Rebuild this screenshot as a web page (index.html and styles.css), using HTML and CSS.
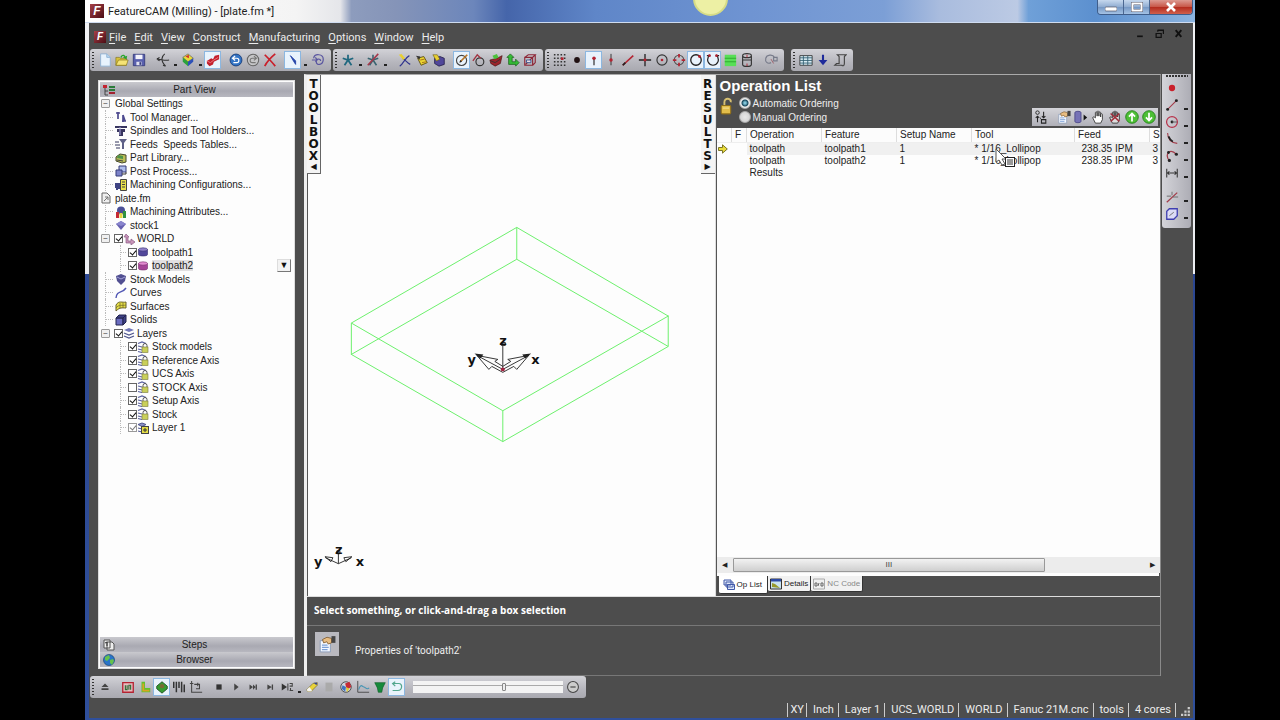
FILE: index.html
```html
<!DOCTYPE html>
<html lang="en">
<head>
<meta charset="utf-8">
<title>FeatureCAM (Milling) - [plate.fm *]</title>
<link rel="stylesheet" href="styles.css">
</head>
<body>
<svg class="defs" aria-hidden="true">
  <symbol id="lay" viewBox="0 0 12 12"><path d="M1 3l5-2 5 2-5 2z" fill="#7076b8"/><path d="M1 6l5 2 5-2M1 9l5 2 5-2" fill="none" stroke="#4f568e" stroke-width="1.3"/></symbol>
  <symbol id="laylock" viewBox="0 0 12 12"><path d="M1 2.500l4-1.500 4 1.500M1 5l4 1M1 8l4 1M1 10.500l4 1" fill="none" stroke="#5a62a0" stroke-width="1.200"/><path d="M6 6V4.500a2 2 0 0 1 4 0V6" fill="none" stroke="#555" /><rect x="5" y="6" width="6" height="5.500" fill="#c9cf5a" stroke="#77793c" stroke-width=".6"/></symbol>
  <symbol id="laycur" viewBox="0 0 12 12"><path d="M1 2.500l4-1.500 4 1.500-4 2zM1 6l4 1M1 9l4 1" fill="#8c92c8" stroke="#4f568e"/><rect x="4.500" y="4.500" width="7" height="7" fill="#e3dc46" stroke="#444"/><path d="M6 8h4M8 6v4" stroke="#333"/></symbol>
  <symbol id="cyl" viewBox="0 0 12 12"><path d="M1.500 3.500v5c0 2 9 2 9 0v-5z" fill="#51479a" stroke="#37306e" stroke-width=".6"/><ellipse cx="6" cy="3.500" rx="4.500" ry="1.700" fill="#8d7fc8" stroke="#37306e" stroke-width=".6"/></symbol>
  <symbol id="props" viewBox="0 0 16 16"><path d="M2 5h9v10H2z" fill="#f4f8ff" stroke="#7d92b4" stroke-width=".7"/><path d="M3.500 9h5M3.500 11h6M3.500 13h5" stroke="#7a9fd6"/><path d="M4 4l4-2 4 1v4l-3 1-1-2-3 1z" fill="#e8bd82" stroke="#7b5527" stroke-width=".7"/><path d="M12 1h3.500v6H12z" fill="#454545"/></symbol>
</svg>
<div class="window">
  <header class="titlebar">
    <span class="logo">F</span>
    <h1 class="title">FeatureCAM (Milling) - [plate.fm *]</h1>
    <span class="orb"></span>
    <div class="winbtns">
      <button aria-label="Minimize"><svg viewBox="0 0 12 10"><rect x="0" y="5" width="12" height="4" rx="1" fill="#fff" stroke="#556" stroke-width=".7"/></svg></button>
      <button aria-label="Maximize"><svg viewBox="0 0 12 10"><rect x="1.500" y="1.500" width="9" height="7" fill="none" stroke="#556" stroke-width="3"/><rect x="1.500" y="1.500" width="9" height="7" fill="none" stroke="#fff" stroke-width="2"/></svg></button>
      <button class="close" aria-label="Close"><svg viewBox="0 0 12 10"><path d="M2 1l8 8M10 1L2 9" stroke="#fff" stroke-width="2.600"/></svg></button>
    </div>
  </header>
  <div class="frame">
    <nav class="menubar">
      <span class="logo small">F</span>
      <button><u>F</u>ile</button><button><u>E</u>dit</button><button><u>V</u>iew</button><button><u>C</u>onstruct</button><button><u>M</u>anufacturing</button><button><u>O</u>ptions</button><button><u>W</u>indow</button><button><u>H</u>elp</button>
      <div class="docbtns">
        <button aria-label="Minimize document"><svg viewBox="0 0 8 8"><path d="M1 6.500h5" stroke="#111" stroke-width="1.500"/></svg></button>
        <button aria-label="Restore document"><svg viewBox="0 0 8 8"><path d="M2.500 1h5v3.500M2.500 1v1.500M2 1.200h5.500M1 4h4.500v3.500H1zM.5 4h5" fill="none" stroke="#111" stroke-width="1.100"/></svg></button>
        <button aria-label="Close document"><svg viewBox="0 0 8 8"><path d="M1.500 1l5 6M6.500 1l-5 6" stroke="#111" stroke-width="1.700"/></svg></button>
      </div>
    </nav>

    <div class="toolbars">
      <div class="bar">
        <i class="grip"></i>
        <button aria-label="New"><svg viewBox="0 0 16 16"><path d="M3 1h7l4 4v10H3z" fill="#e8f3fd" stroke="#8fb1d3"/><path d="M10 1v4h4" fill="#b9d7f2" stroke="#8fb1d3"/></svg></button>
        <button aria-label="Open"><svg viewBox="0 0 16 16"><path d="M1 14V5h4l1 1h7v8z" fill="#d8c23c" stroke="#7d6c12" stroke-width=".7"/><path d="M1 14l3-6h11l-2 6z" fill="#f5e375" stroke="#7d6c12" stroke-width=".7"/><path d="M6 5c1-4 5-4 6-1l2-1-1 4-4-2 1.500-.5C10 3 8 3 8 5z" fill="#25a52b"/></svg></button>
        <button aria-label="Save"><svg viewBox="0 0 16 16"><path d="M1.500 1.500h13v13h-13z" fill="#5960ae" stroke="#353a7c"/><path d="M4 2h8v5H4z" fill="#f3f3fb"/><path d="M5 10h6v4H5z" fill="#e2e2f0"/><path d="M8.500 10.500h2v3h-2z" fill="#333a78"/></svg></button>
        <i class="sep wide"></i>
        <button aria-label="Snap axes"><svg viewBox="0 0 16 16"><path d="M1 7c5 0 8 2 14 1M10 1C6 4 5 9 11 15M1 7l3-2M1 7l3 2M11 15l-3-1" fill="none" stroke="#333" stroke-width="1.300"/></svg></button><button class="drop" aria-label="Axes options"></button>
        <button aria-label="View cube"><svg viewBox="0 0 16 16"><path d="M8 1l6 5-6 4-6-5z" fill="#e9d93b" stroke="#444" stroke-width=".6"/><path d="M2 5l6 5v5L2 10z" fill="#2da23a"/><path d="M14 6l-6 4v5l6-5z" fill="#2d51b8"/><path d="M5 4l4-2v4z" fill="#d02d2d"/></svg></button><button class="drop" aria-label="Views"></button>
        <button class="on" aria-label="Shade"><svg viewBox="0 0 16 16"><path d="M1 9l5-3 2 1 2-4 5-1v5l-6 3-1 3-4 2-3-3z" fill="#c3202d"/><path d="M1 9l4 2 4-3 5-3" stroke="#ef8088" fill="none"/></svg></button>
        <i class="sep"></i>
        <button aria-label="Undo"><svg viewBox="0 0 16 16"><circle cx="8" cy="8" r="6.800" fill="#3273c4" stroke="#173c78"/><path d="M5 6h4c3 0 3 5 0 5H5M7 3.500L4 6l3 2.500" fill="none" stroke="#fff" stroke-width="1.400"/></svg></button>
        <button aria-label="Redo"><svg viewBox="0 0 16 16"><circle cx="8" cy="8" r="6.500" fill="#c6c6c8" stroke="#666" stroke-width="1.200"/><path d="M11 6H7c-3 0-3 5 0 5h4M9 3.500L12 6 9 8.500" fill="none" stroke="#777" stroke-width="1.200"/></svg></button>
        <button aria-label="Delete"><svg viewBox="0 0 16 16"><path d="M2 2c4 4 8 8 12 13M14 1C9 5 5 9 2 15" fill="none" stroke="#c9202b" stroke-width="2"/></svg></button>
        <i class="sep"></i>
        <button class="on" aria-label="Select"><svg viewBox="0 0 16 16"><path d="M5 3l6 6v4l-2-3z" fill="#2543a8" stroke="#2543a8"/></svg></button><button class="drop" aria-label="Select options"></button>
        <button aria-label="Lasso"><svg viewBox="0 0 16 16"><path d="M3 6C4 0 14 1 14 7c0 7-8 8-8 3 0-4 5-4 5-1M1 8h6M5 5l2 3-2 2" fill="none" stroke="#5a56a0" stroke-width="1.400"/></svg></button>
      </div>
      <div class="bar">
        <i class="grip"></i>
        <button aria-label="Features"><svg viewBox="0 0 16 16"><path d="M8 2v5M2 6l6 2 6-2M8 8l4 6M8 8l-4 6" fill="none" stroke="#20687f" stroke-width="2"/></svg></button><button class="drop" aria-label="Feature options"></button>
        <button aria-label="Remove feature"><svg viewBox="0 0 16 16"><path d="M8 2v5M2 6l6 2 6-2M8 8l4 6M8 8l-4 6" fill="none" stroke="#38636f" stroke-width="1.800"/><path d="M14 1L2 14" stroke="#a5384a" stroke-width="1.800"/></svg></button><button class="drop" aria-label="Remove options"></button>
        <i class="sep wide"></i>
        <button aria-label="Curve wizard"><svg viewBox="0 0 16 16"><path d="M2 15c4-2 5-9 11-12M5 6c4 2 5 5 9 7" fill="none" stroke="#30348e" stroke-width="1.300"/><path d="M1 2l3-1 4 5-2 2z" fill="#e8cf30"/></svg></button>
        <button aria-label="Surface wizard"><svg viewBox="0 0 16 16"><path d="M3 6l7-2 4 7-7 3z" fill="#e9d431" stroke="#5b4c10"/><path d="M1 3l5 1-1 4z" fill="#333"/><path d="M6 8l5-1M8 11l5-1" stroke="#a56a18"/></svg></button>
        <button aria-label="Solid wizard"><svg viewBox="0 0 16 16"><path d="M3 6l6-2 5 2v7l-6 2-5-3z" fill="#51479a" stroke="#2b2550"/><path d="M1 2l5 0 3 5-4 2z" fill="#e8cf30" stroke="#5b4c10" stroke-width=".6"/></svg></button>
        <i class="sep"></i>
        <button class="on" aria-label="Circle edit"><svg viewBox="0 0 16 16"><circle cx="7.500" cy="8.500" r="5.800" fill="none" stroke="#444" stroke-width="1.300"/><path d="M6 10L14 2" stroke="#b87525" stroke-width="2"/><path d="M5 11l3-1-2-2z" fill="#222"/></svg></button>
        <button aria-label="Pocket"><svg viewBox="0 0 16 16"><circle cx="9" cy="10" r="4.500" fill="none" stroke="#333" stroke-width="1.300"/><path d="M1 9L6 2l4 4" fill="none" stroke="#a33542" stroke-width="1.500"/></svg></button>
        <button aria-label="Stock"><svg viewBox="0 0 16 16"><path d="M1 8l8-2 6-3-2 9-6 3-5-3z" fill="#9c252c" stroke="#411" stroke-width=".7"/><path d="M4 3l5-2 2 4-5 2z" fill="#4dc13d"/><path d="M2 9l5 2 6-4" stroke="#333" fill="none"/></svg></button>
        <button aria-label="Setup axes"><svg viewBox="0 0 16 16"><path d="M5 1l4 4H7v5h4V7l4 4-4 4v-2H3V5H1z" fill="#35bb36" stroke="#175c18" stroke-width=".8"/></svg></button>
        <button aria-label="Align stock"><svg viewBox="0 0 16 16"><path d="M2 5h9v9H2zM2 5l4-3h8l-3 3M14 2v9l-3 3M3 13L12 4" fill="none" stroke="#8d2636" stroke-width="1.300"/><path d="M4 8h5v3H4z" fill="#f0dfe2" stroke="#36508e"/></svg></button>
      </div>
      <div class="bar">
        <i class="grip"></i>
        <button aria-label="Snap grid"><svg viewBox="0 0 16 16"><path d="M1 2h14M1 6h14M1 10h14M1 14h14" stroke="#333" stroke-width="1.800" stroke-dasharray="1.800 2"/><path d="M9 5h3v3H9z" fill="#b42331"/></svg></button>
        <button aria-label="Snap point"><svg viewBox="0 0 16 16"><circle cx="8" cy="8" r="3.300" fill="#201012"/></svg></button>
        <button class="on" aria-label="Snap endpoint"><svg viewBox="0 0 16 16"><path d="M8 6v8" stroke="#333" stroke-width="1.400"/><circle cx="8" cy="6" r="2" fill="#b42331"/></svg></button>
        <button aria-label="Snap midpoint"><svg viewBox="0 0 16 16"><path d="M8 1v13" stroke="#333" stroke-width="1.100"/><circle cx="8" cy="8" r="2" fill="#b42331"/></svg></button>
        <button aria-label="Snap line"><svg viewBox="0 0 16 16"><path d="M2 14L14 3" stroke="#b42331" stroke-width="1.800"/><path d="M2 14l3-3" stroke="#222" stroke-width="2"/></svg></button>
        <button aria-label="Snap intersection"><svg viewBox="0 0 16 16"><path d="M8 1v14M1 8h14" stroke="#222" stroke-width="1.500"/><circle cx="8" cy="8" r="1.700" fill="#b42331"/></svg></button>
        <button aria-label="Snap centre"><svg viewBox="0 0 16 16"><circle cx="8" cy="8" r="5.800" fill="none" stroke="#333" stroke-width="1.300"/><circle cx="8" cy="8" r="1.500" fill="#b42331"/></svg></button>
        <button aria-label="Snap quadrant"><svg viewBox="0 0 16 16"><circle cx="8" cy="8" r="5.500" fill="none" stroke="#555" stroke-width="1.200"/><path d="M8 1v4M8 11v4M1 8h4M11 8h4" stroke="#b42331" stroke-width="2"/></svg></button>
        <button class="on" aria-label="Snap circle"><svg viewBox="0 0 16 16"><circle cx="8" cy="8" r="6" fill="none" stroke="#222" stroke-width="1.500"/><circle cx="12" cy="4" r="1.700" fill="#b42331"/></svg></button>
        <button class="on" aria-label="Snap arc"><svg viewBox="0 0 16 16"><path d="M4 2C-1 9 4 14 8 14s9-5 4-12M1 3h4M11 3h4" fill="none" stroke="#222" stroke-width="1.400"/><circle cx="4" cy="3" r="1.500" fill="#b42331"/><circle cx="12" cy="3" r="1.500" fill="#b42331"/></svg></button>
        <button aria-label="Snap surface"><svg viewBox="0 0 16 16"><path d="M2 2h13v13H2z" fill="#58df57"/><path d="M2 6h13M2 10h13" stroke="#2ba32c"/></svg></button>
        <button aria-label="Snap solid"><svg viewBox="0 0 16 16"><path d="M3 3v10c0 3 10 3 10 0V3c0-3-10-3-10 0zc0 3 10 3 10 0M3 8h10" fill="none" stroke="#333" stroke-width="1.300"/><path d="M8 2v3M8 12v3" stroke="#b42331"/></svg></button>
        <i class="sep wide"></i>
        <button aria-label="Snap options"><svg viewBox="0 0 16 16"><path d="M8 11c-4 2-7-1-6-5 1-4 8-5 10-1M11 5h4v4h-4z" fill="none" stroke="#777b8a" stroke-width="1.300"/><path d="M8 7l3 5" stroke="#9b5963"/></svg></button>
      </div>
      <div class="bar fourth">
        <i class="grip"></i>
        <button aria-label="Op table"><svg viewBox="0 0 16 16"><path d="M1 3h14v11H1z" fill="#d9eef5" stroke="#333"/><path d="M1 5.500h14M1 8.500h14M1 11.500h14M5 3v11M10 3v11" stroke="#315e70"/></svg></button>
        <button aria-label="Step down"><svg viewBox="0 0 16 16"><path d="M8 2v7" stroke="#1e2b9b" stroke-width="2.400"/><path d="M3 8h10l-5 6z" fill="#1e2b9b"/></svg></button>
        <button aria-label="NC script"><svg viewBox="0 0 16 16"><path d="M5 2h10l-2 2v8c0 3-2 3-3 2H2l2-2h3V4z" fill="none" stroke="#444" stroke-width="1.300"/></svg></button>
      </div>
    </div>

    <div class="work">
      <aside class="sidebar">
        <div class="panel">
          <button class="pbar"><svg viewBox="0 0 14 12"><path d="M1 1h4v3H1z" fill="#c32330"/><path d="M3 4v7h3M3 7h3" fill="none" stroke="#444"/><path d="M7 3h6M7 6h6" stroke="#2d7c3b" stroke-width="2"/><path d="M7 9h6" stroke="#a42330" stroke-width="2"/></svg><span>Part View</span></button>
          <ul class="tree">
            <li><button class="exp" aria-label="Collapse Global Settings">−</button>Global Settings</li>
            <li class="l1"><svg viewBox="0 0 12 12"><path d="M3 1v7M1 2h4M8 4v7M7 10h4M8 4l2 6" stroke="#4d4a8f" stroke-width="1.700"/></svg>Tool Manager...</li>
            <li class="l1"><svg viewBox="0 0 12 12"><path d="M0 1h12v2H0zM2 4h8v3H8v4H4V7H2z" fill="#38355f"/><path d="M5 2v8" stroke="#aaa6dc"/></svg>Spindles and Tool Holders...</li>
            <li class="l1"><svg viewBox="0 0 12 12"><path d="M4 1h8L9 5v6H7V5z" fill="#5e6087"/><path d="M0 4h4M0 7h5M1 10h4" stroke="#33355a"/></svg>Feeds&nbsp; Speeds Tables...</li>
            <li class="l1"><svg viewBox="0 0 12 12"><path d="M1 5l4-3 6 1v7l-4 1-6-2z" fill="#b9bd56" stroke="#46482d"/><path d="M3 3l5 1v3l-6-1z" fill="#4f9347"/><path d="M2 8l6 1" stroke="#444"/></svg>Part Library...</li>
            <li class="l1"><svg viewBox="0 0 12 12"><path d="M4 1h7v6H4z" fill="#aebdec" stroke="#343a78"/><path d="M1 5h6v6H1z" fill="#7b82c8" stroke="#343a78"/><path d="M7 9h4V7" stroke="#333" fill="none"/></svg>Post Process...</li>
            <li class="l1"><svg viewBox="0 0 12 12"><path d="M0 4h5v6H3v1H1V9H0z" fill="#3f4484"/><path d="M5.500 .5h6v11h-6z" fill="#e8e14a" stroke="#444"/><path d="M7 3h3M7 5.500h3M7 8h3" stroke="#444"/></svg>Machining Configurations...</li>
            <li><svg class="doc" viewBox="0 0 10 12"><path d="M1 1h5l3 3v7H1z" fill="#eee" stroke="#666"/><path d="M3 9l4-4M4 5h3v3" stroke="#777" fill="none"/></svg>plate.fm</li>
            <li class="l1"><svg viewBox="0 0 12 12"><circle cx="6" cy="4.500" r="4" fill="#4a4f98"/><path d="M1 6h3v6H1z" fill="#c52a35"/><path d="M4.500 7h3v5h-3z" fill="#e4d33f"/><path d="M8 5h3v7H8z" fill="#2f9140"/></svg>Machining Attributes...</li>
            <li class="l1"><svg viewBox="0 0 12 12"><path d="M1 5l5-3 5 3-5 6z" fill="#6660b0"/><path d="M1 5l5-3 5 3-5 2z" fill="#8a86ce"/></svg>stock1</li>
            <li class="chk0"><button class="exp" aria-label="Collapse WORLD">−</button><input type="checkbox" id="w" checked><svg viewBox="0 0 12 12"><path d="M3 1l3 3H5v4h3V6l4 3-4 3v-2H3V4H1z" fill="#c895b9" stroke="#895a84" stroke-width=".7"/></svg><label for="w">WORLD</label></li>
            <li class="l2"><input type="checkbox" id="t1" checked><svg><use href="#cyl"/></svg><label for="t1">toolpath1</label></li>
            <li class="l2"><input type="checkbox" id="t2" checked><svg class="pink"><use href="#cyl"/></svg><label class="sel" for="t2">toolpath2</label><button class="more" aria-label="toolpath2 menu">▼</button></li>
            <li class="l1"><svg viewBox="0 0 12 12"><path d="M1 3l5-2 5 2-1 5-4 4-4-4z" fill="#514f91"/><path d="M2 4l4 2 4-2" stroke="#a5a3da" fill="none"/></svg>Stock Models</li>
            <li class="l1"><svg viewBox="0 0 12 12"><path d="M1 11C2 3 7 7 11 1" fill="none" stroke="#5056b4" stroke-width="1.400"/></svg>Curves</li>
            <li class="l1"><svg viewBox="0 0 12 12"><path d="M1 11V5c3-5 6-2 10-3v6c-4 0-6-1-10 3z" fill="#e6df48" stroke="#66602a"/><path d="M1 8c3-4 6-2 10-3M5 3v5M8 3v5" fill="none" stroke="#77702a" stroke-width=".8"/></svg>Surfaces</li>
            <li class="l1"><svg viewBox="0 0 12 12"><path d="M1 4h7v7H1z" fill="#6a6cc0" stroke="#22244e"/><path d="M1 4l3-3h7L8 4zM8 4l3-3v7l-3 3z" fill="#3f4186" stroke="#22244e"/></svg>Solids</li>
            <li class="chk0"><button class="exp" aria-label="Collapse Layers">−</button><input type="checkbox" id="ly" checked><svg><use href="#lay"/></svg><label for="ly">Layers</label></li>
            <li class="l2"><input type="checkbox" id="a1" checked><svg><use href="#laylock"/></svg><label for="a1">Stock models</label></li>
            <li class="l2"><input type="checkbox" id="a2" checked><svg><use href="#laylock"/></svg><label for="a2">Reference Axis</label></li>
            <li class="l2"><input type="checkbox" id="a3" checked><svg><use href="#laylock"/></svg><label for="a3">UCS Axis</label></li>
            <li class="l2"><input type="checkbox" id="a4"><svg><use href="#laylock"/></svg><label for="a4">STOCK Axis</label></li>
            <li class="l2"><input type="checkbox" id="a5" checked><svg><use href="#laylock"/></svg><label for="a5">Setup Axis</label></li>
            <li class="l2"><input type="checkbox" id="a6" checked><svg><use href="#laylock"/></svg><label for="a6">Stock</label></li>
            <li class="l2"><input class="dim" type="checkbox" id="a7" checked><svg><use href="#laycur"/></svg><label for="a7">Layer 1</label></li>
          </ul>
          <button class="pbar"><svg viewBox="0 0 14 12"><path d="M2 1h6v8H2zM5 3h5l2 2v6H5z" fill="#eee" stroke="#555"/><path d="M3 4l2-1v4" stroke="#333" fill="none"/></svg><span>Steps</span></button>
          <button class="pbar"><svg viewBox="0 0 14 12"><circle cx="7" cy="6" r="5.500" fill="#2a74c8" stroke="#1c4672" stroke-width=".7"/><path d="M3 3l4-2 1 3-3 3-2-1zM8 6l3-1 1 2-2 4-2-2z" fill="#65c24b"/></svg><span>Browser</span></button>
        </div>
      </aside>

      <main class="main">
        <div class="views">
          <section class="viewport">
            <svg class="model" viewBox="0 0 408 520" preserveAspectRatio="xMidYMid meet">
              <g fill="none" stroke="#6cf06c" stroke-width="1">
                <path d="M209.500 151.500L361.500 240.500L195.500 335.500L43.500 247.500Z"/>
                <path d="M209.500 183.500L361.500 271L195.500 366.500L43.500 279Z"/>
                <path d="M209.500 151.500v32M361.500 240v31M195.500 335.500v31M43.500 247.500v32"/>
              </g>
              <g fill="none" stroke="#222" stroke-width="1">
                <path d="M195.500 294v-24M194 270v-3h4v3zM195.500 294l-26-14 21 4-3 2 8 5M195.500 294l26-14-21 4 3 2-8 5M195.500 297l-11-6-3 3-12-14M195.500 297l11-6 3 3 12-14" stroke-width=".9"/>
                <path d="M30.500 489v-10M29 479v-3h3v3zM30.500 489l-13-6M30.500 489l13-6M17 482l8 1-2 4zM44 482l-8 1 2 4z" stroke-width=".9"/>
              </g>
              <path d="M167 278l9 1-3 4zM224 278l-9 1 3 4z" fill="#222"/>
              <circle cx="195.500" cy="294" r="2" fill="#a22340"/>
              <g class="axis">
                <text x="192" y="270">z</text><text x="160" y="289">y</text><text x="224" y="289">x</text>
                <text x="27" y="479">z</text><text x="6" y="491">y</text><text x="48" y="491">x</text>
              </g>
            </svg>
            <button class="vtab left"><span>T</span><span>O</span><span>O</span><span>L</span><span>B</span><span>O</span><span>X</span><span class="tri">◀</span></button>
            <button class="vtab right"><span>R</span><span>E</span><span>S</span><span>U</span><span>L</span><span>T</span><span>S</span><span class="tri">▶</span></button>
          </section>

          <section class="results">
            <div class="ophead">
              <h2>Operation List</h2>
              <div class="oprow">
                <svg class="lock" viewBox="0 0 12 18"><path d="M4 9V5c0-5 7-4 6 0" fill="none" stroke="#d7c071" stroke-width="1.800"/><rect x="1" y="8" width="9" height="8" rx="1" fill="#e2bd4a" stroke="#8f6e19"/><path d="M2.500 10.500h6" stroke="#f5e29a"/></svg>
                <div class="radios">
                  <label><input type="radio" name="ord" checked>Automatic Ordering</label>
                  <label><input type="radio" name="ord">Manual Ordering</label>
                </div>
                <div class="optools">
                  <button aria-label="Reorder"><svg viewBox="0 0 16 16"><circle cx="4" cy="3" r="2" fill="none" stroke="#222"/><path d="M4 14V7M2 9l2-2 2 2M11 2v7M9 7l2 2 2-2M7 9.500h1M8.500 11h5v4h-5z" fill="none" stroke="#222" stroke-width="1.200"/></svg></button>
                  <i class="sep"></i>
                  <button aria-label="Properties"><svg><use href="#props"/></svg></button>
                  <button aria-label="Tool"><svg viewBox="0 0 16 16"><path d="M1 3v10c0 2 7 2 7 0V3c0-2-7-2-7 0z" fill="#7672b6" stroke="#4b4887"/><path d="M11 5l4 3.500-4 3.500z" fill="#111"/></svg></button>
                  <button aria-label="Hold"><svg viewBox="0 0 16 16"><path d="M5 15L2 9c0-2 2-1 3 0V3c0-1 2-1 2 0v4-5c0-1 2-1 2 0v5-4c0-1 2-1 2 0v5-3c0-1 2-1 2 0v6l-2 4z" fill="#fff" stroke="#333"/></svg></button>
                  <button aria-label="Release"><svg viewBox="0 0 16 16"><path d="M5 15L2 9c0-2 2-1 3 0V3c0-1 2-1 2 0v4-5c0-1 2-1 2 0v5-4c0-1 2-1 2 0v5-3c0-1 2-1 2 0v6l-2 4z" fill="#ddd" stroke="#333"/><path d="M3 4l10 9M13 4L3 13" stroke="#a1303c" stroke-width="1.800"/></svg></button>
                  <button aria-label="Move up"><svg viewBox="0 0 16 16"><circle cx="8" cy="8" r="7.200" fill="#4dbf35" stroke="#25801b"/><path d="M8 13V4M4.500 7.500L8 4l3.500 3.500" fill="none" stroke="#fff" stroke-width="2"/></svg></button>
                  <button aria-label="Move down"><svg viewBox="0 0 16 16"><circle cx="8" cy="8" r="7.200" fill="#4dbf35" stroke="#25801b"/><path d="M8 3v9M4.500 8.500L8 12l3.500-3.500" fill="none" stroke="#fff" stroke-width="2"/></svg></button>
                </div>
              </div>
            </div>
            <div class="oplist">
              <table>
                <colgroup><col class="c1"><col class="c1"><col class="c2"><col class="c2"><col class="c2"><col class="c3"><col class="c2"><col></colgroup>
                <thead><tr><th></th><th>F</th><th>Operation</th><th>Feature</th><th>Setup Name</th><th>Tool</th><th>Feed</th><th>S</th></tr></thead>
                <tbody>
                  <tr class="cur"><td class="arrow"><svg viewBox="0 0 10 10"><path d="M.5 3.500h4V.8L9.300 5 4.500 9.200V6.500h-4z" fill="#e9dc3a" stroke="#6d661b" stroke-width=".9"/></svg></td><td></td><td>toolpath</td><td>toolpath1</td><td>1</td><td>* 1/16_Lollipop</td><td class="num">238.35 IPM</td><td>3</td></tr>
                  <tr><td></td><td></td><td>toolpath</td><td>toolpath2</td><td>1</td><td>* 1/16_Lollipop</td><td class="num">238.35 IPM</td><td>3</td></tr>
                  <tr><td></td><td></td><td>Results</td><td></td><td></td><td></td><td></td><td></td></tr>
                </tbody>
              </table>
              <svg class="cursor" viewBox="0 0 22 20"><path d="M2 1v13l3-2 3 5 3-1-3-5h4z" fill="#fff" stroke="#555"/><rect x="11.500" y="9.500" width="9" height="9" fill="#fff" stroke="#222"/><path d="M13 12h6M13 14h6M13 16h6" stroke="#333"/></svg>
            </div>
            <div class="hscroll"><button aria-label="Scroll left">◀</button><div class="track"><div class="thumb">III</div></div><button aria-label="Scroll right">▶</button></div>
            <div class="tabs">
              <button class="tab active"><svg viewBox="0 0 12 12"><path d="M1 1h7v5H1zM3 3h7v5H3zM4.500 5.500h7v5h-7z" fill="#dfe8fb" stroke="#4159a8"/></svg>Op List</button>
              <button class="tab"><svg viewBox="0 0 12 12"><path d="M.5 1h11v10H.5z" fill="#c9e3ef" stroke="#333"/><path d="M1 1h10v2.500H1z" fill="#2d4aa5"/><path d="M2 9V5l3 1 5 4z" fill="#97992a"/></svg>Details</button>
              <button class="tab off" disabled><svg viewBox="0 0 12 12"><path d="M.5 1h11v10H.5z" fill="#eee" stroke="#aaa"/><path d="M2 5v3h2V5zM5 8l1-3M8 5v3h2V5z" fill="none" stroke="#666"/></svg>NC Code</button>
            </div>
          </section>
        </div>
        <section class="message">
          <p class="prompt">Select something, or click-and-drag a box selection</p>
          <div class="hint"><button class="pbtn" aria-label="Properties"><svg><use href="#props"/></svg></button><span>Properties of 'toolpath2'</span></div>
        </section>
      </main>

      <aside class="rail">
        <div class="vbar">
          <i class="hgrip"></i>
          <button aria-label="Point"><svg viewBox="0 0 16 16"><circle cx="8" cy="8" r="3.600" fill="#c9202b"/></svg></button>
          <button class="dd" aria-label="Line"><svg viewBox="0 0 16 16"><path d="M3 13L13 3" stroke="#a33b48" stroke-width="1.300"/><circle cx="3" cy="13" r="1.700" fill="#222"/><circle cx="13" cy="3" r="1.700" fill="#222"/></svg></button>
          <button class="dd" aria-label="Circle"><svg viewBox="0 0 16 16"><circle cx="8" cy="8" r="6.200" fill="none" stroke="#b8324a" stroke-width="1.400"/><circle cx="8" cy="8" r="1.600" fill="#222"/><path d="M8 8h6" stroke="#555"/></svg></button>
          <button class="dd" aria-label="Fillet"><svg viewBox="0 0 16 16"><path d="M3 1c0 7 3 11 11 12" fill="none" stroke="#a33b48" stroke-width="1.200"/><path d="M4 5c1 3 2 4 5 6" fill="none" stroke="#222" stroke-width="2"/></svg></button>
          <button class="dd" aria-label="Arc"><svg viewBox="0 0 16 16"><path d="M5 14C-1 5 6-1 13 6" fill="none" stroke="#a33b48" stroke-width="1.400"/><circle cx="5" cy="13" r="1.800" fill="#222"/><circle cx="13" cy="6" r="1.800" fill="#222"/><circle cx="4" cy="4" r="1.600" fill="#222"/></svg></button>
          <button class="dd" aria-label="Dimension"><svg viewBox="0 0 16 16"><path d="M2 3v10M14 3v10M3 8h10M5 6L3 8l2 2M11 6l2 2-2 2" fill="none" stroke="#333" stroke-width="1.200"/></svg></button>
          <i class="vsep"></i>
          <button class="dd" aria-label="Trim"><svg viewBox="0 0 16 16"><path d="M2 14L14 3" stroke="#a33b48" stroke-width="1.400"/><path d="M2 7h5M8 2v4M9 8h6" stroke="#666"/></svg></button>
          <button class="dd" aria-label="Curve"><svg viewBox="0 0 16 16"><path d="M5 2h9v8l-4 4H2V5z" fill="#dcdcf4" stroke="#3f3fb0" stroke-width="1.500"/><path d="M5 10l5-4" stroke="#666"/></svg></button>
        </div>
      </aside>
    </div>

    <div class="player">
      <div class="bar">
        <i class="grip"></i>
        <button aria-label="Eject"><svg viewBox="0 0 16 16"><path d="M4 8l4-4 4 4zM4 9.500h8v2H4z" fill="#444"/></svg></button>
        <i class="sep"></i>
        <button aria-label="Simulate 2D"><svg viewBox="0 0 16 16"><path d="M2 3h12v11H2z" fill="#e8bcc0" stroke="#b42331" stroke-width="1.500"/><path d="M5 6v5h2V6M9 11V6h2v5" stroke="#2c6e36" fill="none" stroke-width="1.300"/></svg></button>
        <button aria-label="Centerline"><svg viewBox="0 0 16 16"><path d="M4 2h4v7h6v5H4z" fill="#60c32d"/><path d="M6 4v8h7" stroke="#d9a324" stroke-width="2" fill="none"/></svg></button>
        <button class="on" aria-label="Simulate 3D"><svg viewBox="0 0 16 16"><path d="M2 7l6-5 6 5v3l-6 5-6-5z" fill="#359c32" stroke="#204f20"/><circle cx="8" cy="7" r="2.500" fill="#7a6a34"/></svg></button>
        <button aria-label="Machine sim"><svg viewBox="0 0 16 16"><path d="M2 2v7M5 2v12M8 2v7M11 2v12M14 5v9" stroke="#333" stroke-width="1.700"/></svg></button>
        <button aria-label="Region"><svg viewBox="0 0 16 16"><path d="M3 1v13h12M1 4h4M6 5h6v5H8M10 3v4" stroke="#444" fill="none" stroke-width="1.200"/></svg></button>
        <i class="sep"></i>
        <button aria-label="Stop"><svg viewBox="0 0 16 16"><path d="M5 5h6v6H5z" fill="#333"/></svg></button>
        <button aria-label="Play"><svg viewBox="0 0 16 16"><path d="M6 4l5 4-5 4z" fill="#444"/></svg></button>
        <button aria-label="Fast forward"><svg viewBox="0 0 16 16"><path d="M4 5l4 3-4 3zM8 5l3 3-3 3zM11 5h1.500v6H11z" fill="#444"/></svg></button>
        <button aria-label="Next operation"><svg viewBox="0 0 16 16"><path d="M5 5l5 3-5 3zM10 5h1.500v6H10z" fill="#444"/></svg></button>
        <button aria-label="Play to"><svg viewBox="0 0 16 16"><path d="M2 4l6 4-6 4z" fill="#333"/><path d="M9 4v8M11 4h3v3h-3M11 12h4M12 9v3" stroke="#444" stroke-width="1.200" fill="none"/></svg></button><button class="drop" aria-label="Play options"></button>
        <button aria-label="Erase"><svg viewBox="0 0 16 16"><path d="M2 11l7-7 5-1v3l-7 7H3z" fill="#e9d33a" stroke="#6c5f1b" stroke-width=".7"/><path d="M2 11l3-3 3 4-1 1H3z" fill="#f4f4f4"/><path d="M10 3l4 0-1 3z" fill="#34438d"/></svg></button>
        <button aria-label="Save image" disabled><svg viewBox="0 0 16 16"><path d="M4 3h8v10H4z" fill="#aaa"/></svg></button>
        <button aria-label="Colours"><svg viewBox="0 0 16 16"><circle cx="8" cy="8" r="6" fill="#cfd6df" stroke="#444"/><path d="M7 4l5-2 2 6-5 3z" fill="#c62b36"/><path d="M4 6l4 2-1 5-4-3z" fill="#3f74c0"/><path d="M8 8l4 2-3 4z" fill="#e1cd35"/></svg></button>
        <button aria-label="Graph"><svg viewBox="0 0 16 16"><path d="M2 1v13h13" stroke="#444" fill="none"/><path d="M3 11c3-8 4-3 6-3s3 4 6 1" fill="none" stroke="#4695b5" stroke-width="1.300"/></svg></button>
        <button aria-label="Filter"><svg viewBox="0 0 16 16"><path d="M2 3h12l-3 6-1 5H6L5 9z" fill="#168a3b" stroke="#0c5a25" stroke-width=".7"/></svg></button>
        <button class="on" aria-label="Return"><svg viewBox="0 0 16 16"><path d="M3 4h7c5 0 4 8-1 8H3M6 2L3 4l3 3" fill="none" stroke="#53a78e" stroke-width="1.400"/></svg></button>
        <i class="sep"></i>
        <input class="speed" type="range" min="0" max="100" value="61" aria-label="Simulation speed">
        <button aria-label="Reset speed"><svg viewBox="0 0 16 16"><circle cx="8" cy="8" r="6.200" fill="#ccc" stroke="#444" stroke-width="1.200"/><path d="M5 8h6" stroke="#555" stroke-width="1.500"/></svg></button>
      </div>
    </div>
    <footer class="status"><span>XY</span><span>Inch</span><span>Layer 1</span><span>UCS_WORLD</span><span>WORLD</span><span>Fanuc 21M.cnc</span><span>tools</span><span>4 cores</span>
      <svg class="size" viewBox="0 0 9 9"><path d="M6 1h2v2H6zM6 4h2v2H6zM3 4h2v2H3zM0 7h2v2H0zM3 7h2v2H3zM6 7h2v2H6z" fill="#ccc"/></svg>
    </footer>
  </div>
</div>
</body>
</html>
```
FILE: styles.css
```css
* { box-sizing: border-box; }
html, body { height: 100%; }
body { margin: 0; padding: 0 85px; background: #000; font: 10px "Liberation Sans", Arial, sans-serif; color: #222; overflow: hidden; }
button { margin: 0; padding: 0; border: 0; background: none; font: inherit; color: inherit; }
h1, h2, p, ul { margin: 0; padding: 0; }
.defs { position: absolute; width: 0; height: 0; }

.window { display: flex; flex-direction: column; height: 100vh; padding: 0 2px 2px 4px; background: linear-gradient(180deg, #f2f3f5 0, #eceef2 38%, #2c4791 38%, #2f4f9b 100%); }
.titlebar { position: relative; display: flex; align-items: center; gap: 4px; height: 23px; margin: 0 -2px 0 -4px; padding: 0 2px 0 5px; border-bottom: 1px solid #cfdcf0; background: linear-gradient(90deg, #fff 0, #f4f4f4 19%, #e5e6ea 23%, #8d9cbd 24%, #8594b8 28%, #6c86bb 35%, #4565aa 38%, #5f86c8 46%, #6f94d2 60%, #7c9fd6 72%, #a9bcde 77%, #bccae4 84%, #6fa0d8 85%, #5c90cf 91%, #8bb4e0 100%); }
.logo { display: grid; place-items: center; width: 14px; height: 14px; background: linear-gradient(135deg, #a54048, #4c0c14); color: #fff; font: italic bold 12px/14px "Liberation Sans", Arial, sans-serif; }
.logo.small { width: 12px; height: 12px; font-size: 10px; line-height: 12px; }
.title { flex: 1; font: 11px Roboto, "Noto Sans", sans-serif; color: #222; }
.orb { position: absolute; left: 608px; top: -19px; width: 35px; height: 35px; border-radius: 50%; background: #edf0a4; border: 2px solid #d6dc86; clip-path: inset(19px 0 0 0); }
.winbtns { display: flex; align-self: flex-start; height: 15px; border: 1px solid #3f5d8a; border-top: 0; border-radius: 0 0 4px 4px; overflow: hidden; }
.winbtns button { display: grid; place-items: center; width: 26px; background: linear-gradient(#c6d8ee, #8facd1 50%, #7597c4 50%, #a4c2e4); border-right: 1px solid #4b6791; }
.winbtns .close { width: 42px; border: 0; background: linear-gradient(#dc9a91, #c75546 50%, #b32a1c 50%, #d0604c); }
.winbtns svg { width: 12px; height: 10px; }

.frame { flex: 1; min-height: 0; display: flex; flex-direction: column; background: #4d4d4d; }
.menubar { display: flex; align-items: center; height: 26px; padding: 2px 10px 0 5px; gap: 8px; color: #ececec; font: 11px Roboto, "Noto Sans", sans-serif; }
.menubar .logo { margin-right: -5px; }
.menubar u { text-underline-offset: 2px; }
.docbtns { display: flex; gap: 10px; margin-left: auto; align-self: flex-start; padding-top: 4px; }
.docbtns svg { display: block; width: 9px; height: 9px; }

.toolbars { display: flex; height: 22px; gap: 2px; padding-left: 1px; }
.bar { display: flex; align-items: center; height: 22px; padding-right: 5px; border-radius: 3px; background: linear-gradient(#d2d2d7, #b6b6bd 60%, #a9a9b0); }
.fourth { margin-left: 5px; }
.grip { width: 2px; height: 17px; margin: 0 2px; background: repeating-linear-gradient(#333 0 1px, transparent 1px 3px); }
.bar button { display: grid; place-items: center; width: 17px; height: 18px; }
.bar button svg { width: 14px; height: 14px; }
.bar button.on { border: 1px solid #8cb7e0; background: #e9f3fc; }
.bar button.drop { width: 8px; }
.drop::after { content: ""; width: 3px; height: 2px; margin-top: 9px; background: #222; }
.sep { width: 6px; }
.sep.wide { width: 7px; }

.work { flex: 1; min-height: 0; display: flex; padding-top: 3px; }
.sidebar { width: 215px; padding: 6px 9px 7px 9px; display: flex; }
.panel { flex: 1; display: flex; flex-direction: column; padding: 1px; border: 1px solid #ddd; background: #fdfdfd; }
.pbar { display: grid; grid-template-columns: 18px 1fr 22px; align-items: center; height: 15px; background: linear-gradient(#c9c9ce, #a9a9b2 60%, #b7b7bf); color: #222; }
.pbar svg { width: 14px; height: 12px; margin-left: 2px; }
.tree { flex: 1; padding-left: 15px; list-style: none; }
.tree li { display: flex; align-items: center; height: 13px; white-space: nowrap; }
.tree li:nth-child(even) { height: 14px; }
.tree li svg { width: 12px; height: 12px; margin-right: 3px; flex: none; }
.tree li .doc { width: 10px; margin: 0 4px 0 -14px; }
.tree .exp { width: 9px; height: 9px; margin: 0 5px 0 -14px; border: 1px solid #999; border-radius: 1px; background: #f0f0f0; font-size: 8px; line-height: 7px; color: #444; }
.tree .l1::before, .tree .l2::before { content: ""; align-self: stretch; width: 8px; margin-left: -10px; margin-right: 1px; border-left: 1px dotted #bbb; background: repeating-linear-gradient(90deg, #bbb 0 1px, transparent 1px 2px) 0 50% / 100% 1px no-repeat; }
.tree .l2 { padding-left: 15px; }
.tree input { appearance: none; position: relative; width: 9px; height: 9px; margin: 0 4px 0 -1px; border: 1px solid #666; background: #fff; flex: none; }
.tree input:checked::after { content: ""; position: absolute; left: 2px; top: 0; width: 3px; height: 5px; border: solid #111; border-width: 0 1px 1px 0; transform: rotate(40deg); }
.tree input.dim { border-color: #999; }
.tree input.dim:checked::after { border-color: #777; }
.tree .chk0 svg { margin-left: -4px; margin-right: 2px; }
.tree .l2::before { width: 6px; }
.tree .l2 input { margin-left: 0; }
.tree .l2 svg { margin-left: -4px; }
.tree .pink { filter: hue-rotate(50deg) brightness(1.200); }
.tree .sel { background: #e2e0e2; }
.tree .more { width: 14px; height: 13px; margin-left: auto; margin-right: 2px; border: 1px solid #777; border-color: #ddd #777 #777 #ddd; background: #f3f3f3; font-size: 9px; line-height: 11px; color: #111; }

.main { flex: 1; min-width: 0; display: flex; flex-direction: column; border-left: 3px solid #efefef; border-right: 1px solid #8a8a8a; border-top: 1px solid #aaa; }
.views { flex: 1; min-height: 0; display: flex; border-bottom: 1px solid #ddd; }
.viewport { position: relative; flex: 408 1 0; min-width: 0; border-left: 1px solid #555; border-right: 1px solid #ddd; background: #fdfdfd; }
.model { display: block; width: 100%; height: 100%; }
.axis { font: bold 13px "DejaVu Sans", Verdana, sans-serif; fill: #111; }
.vtab { position: absolute; top: 0; display: flex; flex-direction: column; align-items: center; width: 14px; padding: 3px 0 1px; background: #f4f4f4; font: bold 12px/12px "DejaVu Sans", Verdana, sans-serif; color: #111; border-bottom: 1px solid #666; }
.vtab.left { left: -1px; border-right: 1px solid #666; }
.vtab.right { right: 0; }
.vtab .tri { font-size: 8px; line-height: 10px; }

.results { flex: 445 1 0; min-width: 0; display: flex; flex-direction: column; border-left: 1px solid #555; background: #4d4d4d; }
.ophead { height: 53px; padding: 1px 2px 0 3px; color: #eee; }
.ophead h2 { color: #fff; font: bold 15px/19px "Liberation Sans", Arial, sans-serif; }
.oprow { display: flex; align-items: flex-start; gap: 6px; height: 33px; }
.lock { width: 13px; height: 19px; margin-top: 2px; }
.radios { display: flex; flex-direction: column; padding-top: 1px; }
.radios label { display: flex; align-items: center; gap: 2px; height: 14px; }
.radios input { appearance: none; width: 12px; height: 12px; margin: 0; border: 1px solid #aaa; border-radius: 50%; background: radial-gradient(#e8e8e8, #ccc); }
.radios input:checked { background: radial-gradient(#7fc4d8 0 1px, #17475c 3px, #eee 4px); }
.optools { display: flex; align-items: center; margin: 0 0 2px auto; align-self: flex-end; height: 18px; padding-right: 1px; background: linear-gradient(#d4d4d9, #b0b0b8); }
.optools button { width: 17px; height: 17px; display: grid; place-items: center; }
.optools svg { width: 14px; height: 14px; }
.oplist { position: relative; flex: 1; min-height: 0; overflow: hidden; background: #fdfdfd; }
table { width: 100%; table-layout: fixed; border-collapse: collapse; }
.c1 { width: 15px; } .c2 { width: 75px; } .c3 { width: 103px; }
th, td { height: 12px; padding: 0 0 0 3px; text-align: left; font-weight: normal; line-height: 12px; white-space: nowrap; overflow: hidden; }
th { height: 14px; border-right: 1px solid #ddd; border-bottom: 1px solid #eee; background: #fcfcfc; }
th:last-child, td:last-child { padding-left: 3px; border-right: 0; }
td.num { padding-left: 7px; }
.cur td:nth-child(n+3) { background: #f0f0f0; }
td.arrow { padding: 0 1px; }
.arrow svg { display: block; width: 10px; height: 10px; }
.cursor { position: absolute; left: 277px; top: 20px; width: 22px; height: 20px; }
.hscroll { display: flex; align-items: center; height: 16px; background: #ececec; }
.hscroll > button { width: 16px; font-size: 7px; }
.track { flex: 1; height: 14px; display: flex; }
.thumb { width: 76%; border: 1px solid #999; border-radius: 1px; background: linear-gradient(#f2f2f2, #cfcfcf); text-align: center; font-size: 8px; line-height: 11px; color: #444; }
.tabs { display: flex; align-items: flex-start; height: 23px; padding-left: 2px; margin-right: 1px; border-top: 3px solid #fdfdfd; }
.tab { display: flex; align-items: center; gap: 2px; height: 16px; padding: 0 2px; border: solid #333; border-width: 0 1px 1px 0; background: #f1f1f1; font-size: 8px; border-radius: 0 0 2px 2px; }
.tab.active { height: 18px; padding: 0 5px 0 4px; background: #fff; }
.tab.off { color: #888; }
.tab svg { width: 12px; height: 12px; }

.message { height: 79px; border-bottom: 1px solid #777; color: #eee; }
.prompt { height: 29px; padding: 5px 7px; border-bottom: 1px solid #777; font: bold 10px/16px "Open Sans", "Noto Sans", sans-serif; color: #fff; }
.hint { display: flex; gap: 16px; padding: 6px 8px; font: 10px/16px Roboto, "Noto Sans", sans-serif; }
.hint span { padding-top: 11px; }
.pbtn { width: 24px; height: 24px; display: grid; place-items: center; background: #b9b9bf; }
.pbtn svg { width: 18px; height: 18px; }

.rail { width: 32px; padding: 0 2px 0 1px; }
.vbar { display: flex; flex-direction: column; height: 154px; padding-left: 1px; border-radius: 0 0 3px 3px; background: linear-gradient(90deg, #d4d4d9, #adadb5); }
.hgrip { height: 2px; margin: 1px 3px 2px; background: repeating-linear-gradient(90deg, #333 0 2px, transparent 2px 3px); }
.vbar button { display: flex; align-items: center; height: 17px; padding-left: 2px; gap: 5px; }
.vbar button svg { width: 14px; height: 14px; }
.vbar .dd::after { content: ""; width: 4px; height: 2px; margin-top: 9px; background: #222; }
.vsep { height: 7px; }

.player { padding-left: 1px; height: 22px; display: flex; }
.speed { appearance: none; width: 150px; height: 12px; margin: 0 1px 0 2px; background: linear-gradient(#f4f4f4 0 4px, #aaa 4px 5px, #f4f4f4 5px); }
.speed::-webkit-slider-thumb { appearance: none; width: 4px; height: 8px; border: 1px solid #888; border-radius: 1px; background: #eee; }
.status { display: flex; justify-content: flex-end; align-items: center; height: 20px; padding-top: 3px; color: #ececec; font: 11px/14px Roboto, "Noto Sans", sans-serif; }
.status span { padding: 0 4px 0 6px; border-right: 1px solid #ccc; }
.status span:first-child { border-left: 1px solid #ccc; padding: 0 2px; }
.size { width: 10px; height: 10px; margin: 2px 2px 0 5px; }
```
